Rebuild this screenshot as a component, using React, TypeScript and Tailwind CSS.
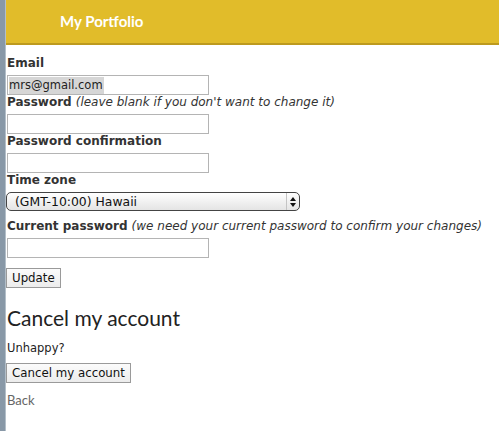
const body = { fontFamily: '"DejaVu Sans", Verdana, sans-serif' };
const display = { fontFamily: 'Lato, "Open Sans", sans-serif' };

const Field = ({ label, note, children }: { label: string; note?: string; children: React.ReactNode }) => (
  <div>
    <div className="h-[13px] whitespace-nowrap text-[12px] leading-[15px] text-[#333]">
      <span className="font-bold">{label}</span>
      {note && <em className="ml-[4px]">{note}</em>}
    </div>
    <div className="mt-[6px]">{children}</div>
  </div>
);

const TextInput = ({ value }: { value?: string }) => (
  <div className="flex h-[20px] w-[202px] items-center border border-[#b4b4b4] bg-white px-px">
    {value && <span className="bg-[#d6d6d6] pr-[1px] text-[11.5px] leading-[17px] text-[#222]">{value}</span>}
  </div>
);

const Button = ({ children }: { children: React.ReactNode }) => (
  <button
    className="h-[20px] border border-[#9a9a9a] bg-gradient-to-b from-[#fbfbfb] to-[#ececec] px-[5px] text-[11.8px] leading-[16px] text-[#111]"
    style={body}
  >
    {children}
  </button>
);

export default function App() {
  return (
    <div className="flex min-h-[431px] bg-white" style={body}>
      <div className="w-[6px] shrink-0 border-r border-[#b3bfc9] bg-[#8898a7]" />
      <div className="flex-1">
        <div className="flex h-[45px] items-center border-b-2 border-[#bd9a1e] bg-[#e1bc2a] pl-[54px]">
          <span className="text-[15px] font-bold text-white" style={display}>
            My Portfolio
          </span>
        </div>

        <div className="pl-px pt-[11px]">
          <div className="flex flex-col">
            <Field label="Email">
              <TextInput value="mrs@gmail.com" />
            </Field>
            <Field label="Password" note="(leave blank if you don't want to change it)">
              <TextInput />
            </Field>
            <Field label="Password confirmation">
              <TextInput />
            </Field>
            <Field label="Time zone">
              <div className="-ml-px flex h-[19px] w-[294px] items-center rounded-[5px] border border-[#444] bg-gradient-to-b from-white to-[#e4e4e4]">
                <span className="flex-1 pl-[8px] text-[12.4px] leading-[17px] text-[#111]">(GMT-10:00) Hawaii</span>
                <span className="flex h-full w-[13px] flex-col items-center justify-center gap-[2px] border-l border-[#c4c4c4]">
                  <svg width="6" height="4" viewBox="0 0 6 4"><path d="M3 0L6 4H0z" fill="#111" /></svg>
                  <svg width="6" height="4" viewBox="0 0 6 4"><path d="M0 0H6L3 4z" fill="#111" /></svg>
                </span>
              </div>
            </Field>
            <div className="mt-[8px]">
              <Field label="Current password" note="(we need your current password to confirm your changes)">
                <TextInput />
              </Field>
            </div>
            <div className="-ml-px mt-[7px]">
              <Button>Update</Button>
            </div>
          </div>

          <h2 className="mt-[16px] text-[21px] leading-[26px] text-[#222]" style={display}>
            Cancel my account
          </h2>
          <p className="mt-[9px] text-[11.5px] leading-[16px] text-[#222]">Unhappy?</p>
          <div className="-ml-px mt-[4px]">
            <Button>Cancel my account</Button>
          </div>
          <a className="mt-[8px] block text-[13px] leading-[16px] text-[#666]" style={display}>
            Back
          </a>
        </div>
      </div>
    </div>
  );
}
